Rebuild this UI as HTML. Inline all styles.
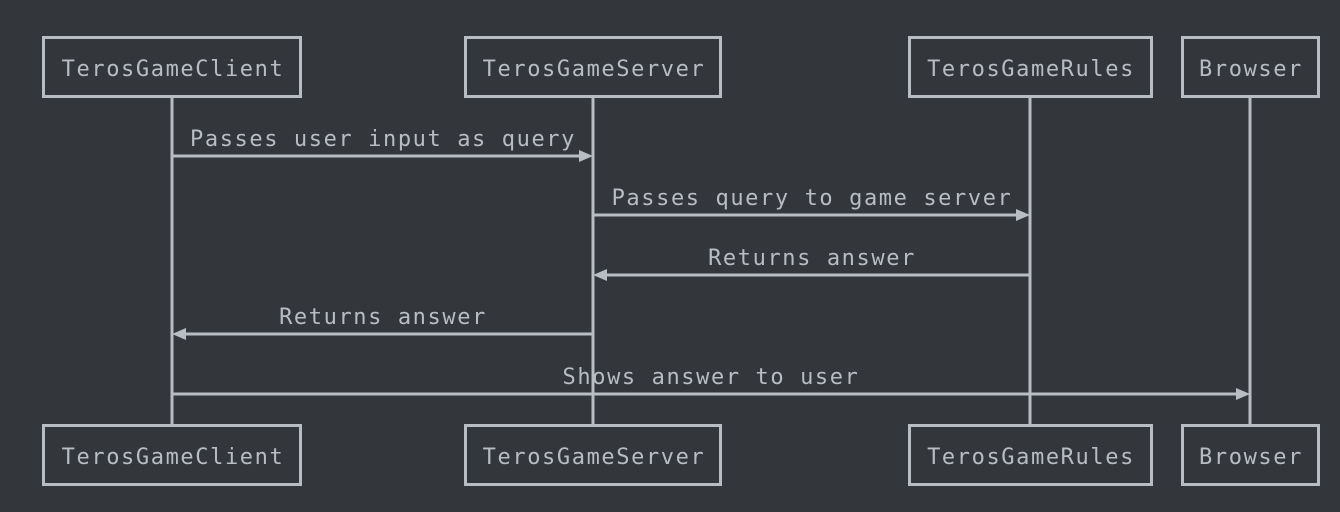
<!DOCTYPE html>
<html><head><meta charset="utf-8"><style>
html,body{margin:0;padding:0;background:#33373b;}
svg{display:block}
text{font-family:"DejaVu Sans Mono","Liberation Mono",monospace;font-size:22px;letter-spacing:1.6px;fill:#b8bcc3;}
</style></head><body>
<svg width="1340" height="512" viewBox="0 0 1340 512" xmlns="http://www.w3.org/2000/svg">
<rect width="1340" height="512" fill="#33373b"/>
<g stroke="#b8bcc3" stroke-width="3" fill="none">
<line x1="172" y1="97" x2="172" y2="425"/>
<line x1="593" y1="97" x2="593" y2="425"/>
<line x1="1030" y1="97" x2="1030" y2="425"/>
<line x1="1250" y1="97" x2="1250" y2="425"/>
<rect x="43.5" y="37.5" width="257" height="59"/>
<rect x="465.5" y="37.5" width="255" height="59"/>
<rect x="909.5" y="37.5" width="242" height="59"/>
<rect x="1182.5" y="37.5" width="136" height="59"/>
<rect x="43.5" y="425.5" width="257" height="59"/>
<rect x="465.5" y="425.5" width="255" height="59"/>
<rect x="909.5" y="425.5" width="242" height="59"/>
<rect x="1182.5" y="425.5" width="136" height="59"/>
<line x1="172" y1="156" x2="580" y2="156"/>
<line x1="593" y1="215" x2="1017" y2="215"/>
<line x1="1030" y1="275" x2="606" y2="275"/>
<line x1="593" y1="334" x2="185" y2="334"/>
<line x1="172" y1="394" x2="1237" y2="394"/>
</g>
<g fill="#b8bcc3">
<polygon points="593,156 579,150 579,162"/>
<polygon points="1030,215 1016,209 1016,221"/>
<polygon points="593,275 607,269 607,281"/>
<polygon points="172,334 186,328 186,340"/>
<polygon points="1250,394 1236,388 1236,400"/>
</g>
<g text-anchor="middle">
<text x="173" y="76">TerosGameClient</text>
<text x="594" y="76">TerosGameServer</text>
<text x="1031" y="76">TerosGameRules</text>
<text x="1251" y="76">Browser</text>
<text x="173" y="464">TerosGameClient</text>
<text x="594" y="464">TerosGameServer</text>
<text x="1031" y="464">TerosGameRules</text>
<text x="1251" y="464">Browser</text>
<text x="383" y="146">Passes user input as query</text>
<text x="812" y="205">Passes query to game server</text>
<text x="812" y="265">Returns answer</text>
<text x="383" y="324">Returns answer</text>
<text x="711" y="384">Shows answer to user</text>
</g>
</svg>
</body></html>
